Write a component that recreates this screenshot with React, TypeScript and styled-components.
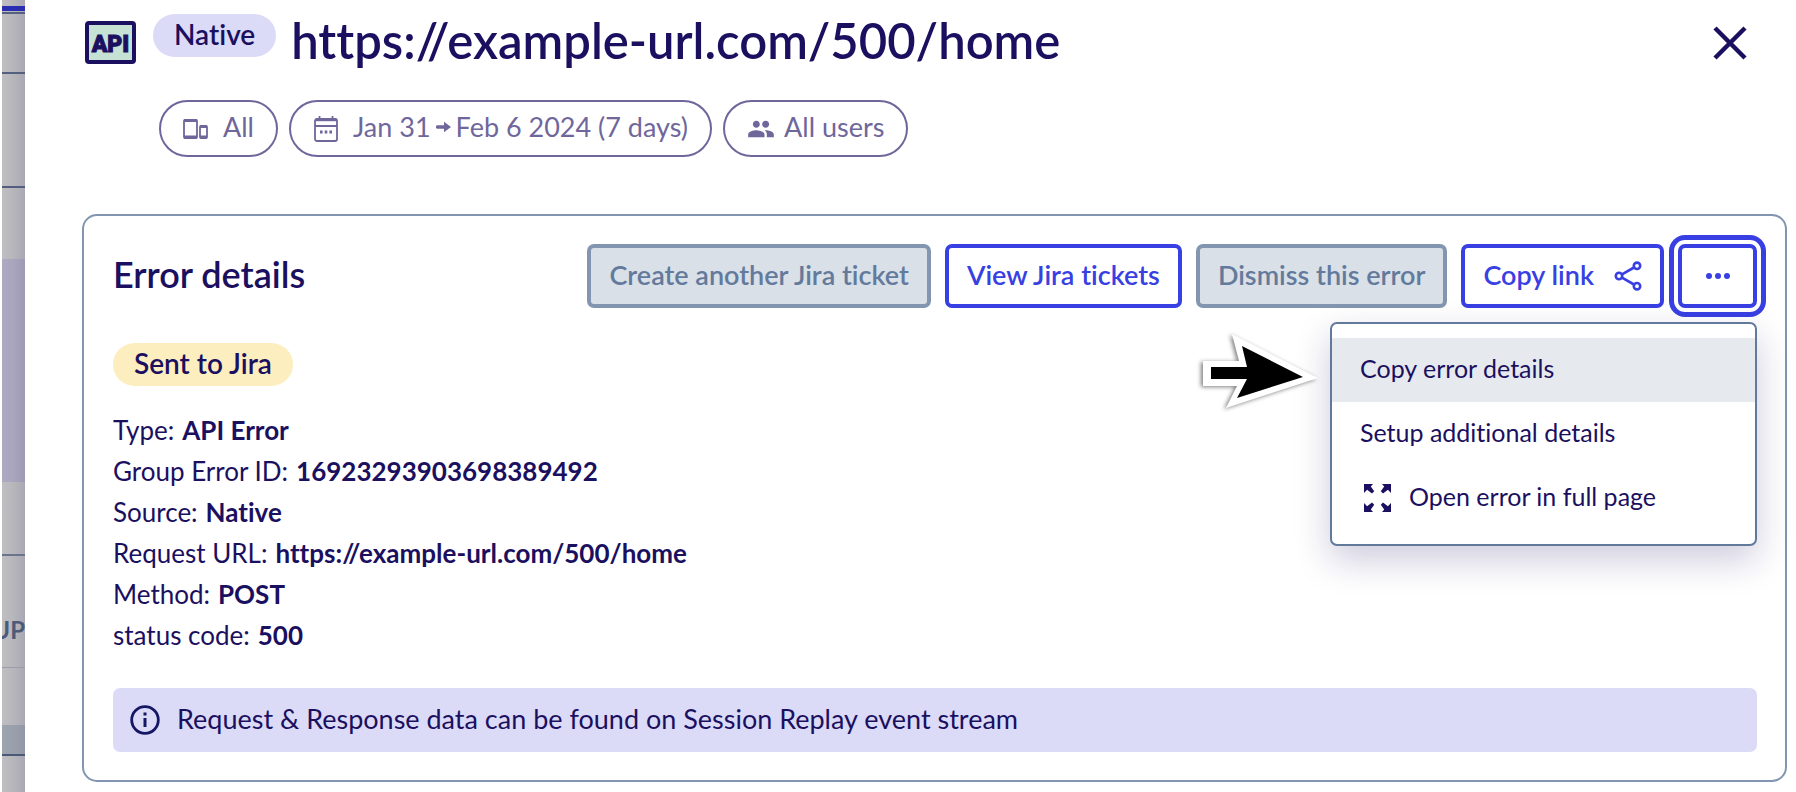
import React from 'react';
import styled, { createGlobalStyle, css } from 'styled-components';
import { MdPeople } from 'react-icons/md';

const navy = '#1b1060';
const blue = '#3840e3';
const muted = '#6f679b';
const slate = '#8296b1';
const lavender = '#dbdbf8';

const GlobalStyle = createGlobalStyle`
  * { box-sizing: border-box; }
  body {
    margin: 0;
    background: #fff;
    color: ${navy};
    font-family: Lato, "Open Sans", sans-serif;
    font-size: 27px;
    line-height: 41px;
    font-variant-ligatures: none;
  }
  button { font: inherit; color: inherit; cursor: pointer; }
  svg { display: block; flex: none; }
`;

const Page = styled.div`
  display: grid;
  grid-template-columns: 25px minmax(0, 1fr);
  min-height: 100vh;
`;

const Backdrop = styled.aside`
  display: flex;
  flex-direction: column;
  margin-left: 2px;
  overflow: hidden;
  background: linear-gradient(to right, #bfbec2, #b7b6bb 50%, #a9a7b4);
`;

const Band = styled.div<{ $height: number; $color?: string }>`
  flex: none;
  height: ${(p) => p.$height}px;
  background: ${(p) => p.$color ?? 'transparent'};
`;

const ColumnHead = styled.div`
  display: flex;
  flex: none;
  align-items: center;
  justify-content: flex-end;
  height: 111px;
  padding-top: 36px;
  color: #4d5a78;
  font-size: 24px;
  font-weight: 700;
`;

const Panel = styled.main`
  padding: 14px 9px 9px 57px;
`;

const Header = styled.header`
  display: flex;
  align-items: flex-start;
  padding: 0 37px 0 3px;
`;

const ApiIcon = styled.svg`
  margin: 7px 17px 0 0;
`;

const Tag = styled.span<{ $tone: 'lavender' | 'yellow' }>`
  display: inline-block;
  height: 43px;
  padding: 0 21px;
  border-radius: 22px;
  font-size: 28px;
  font-weight: 600;
  line-height: 40px;
  background: ${(p) => (p.$tone === 'yellow' ? '#fdeec0' : lavender)};
`;

const Title = styled.h1`
  flex: 1;
  margin: 0 0 0 15px;
  font-size: 49px;
  font-weight: 600;
  line-height: 52px;
`;

const CloseButton = styled.button`
  display: flex;
  margin-top: 9px;
  padding: 0;
  border: 0;
  background: none;
`;

const Chips = styled.div`
  display: flex;
  gap: 11px;
  margin: 34px 0 57px 77px;
`;

/* Lifts the text slightly so that it looks centred next to an icon. */
const Label = styled.span`
  padding-bottom: 4px;
`;

const Chip = styled.button<{ $tight?: boolean }>`
  display: flex;
  align-items: center;
  gap: ${(p) => (p.$tight ? 9 : 14)}px;
  height: 57px;
  padding: 0 22px;
  border: 2px solid ${muted};
  border-radius: 29px;
  background: #fff;
  color: ${muted};
`;

const Range = styled(Label)`
  display: flex;
  align-items: center;
  gap: 5px;
`;

const Card = styled.section`
  padding: 28px 28px 28px 29px;
  border: 2px solid ${slate};
  border-radius: 15px;
`;

const CardHead = styled.div`
  display: flex;
  align-items: center;
  justify-content: space-between;
  margin-bottom: 35px;
`;

const CardTitle = styled.h2`
  margin: 0;
  padding-bottom: 4px;
  font-size: 36px;
  font-weight: 600;
`;

const Actions = styled.div`
  display: flex;
  gap: 14px;
`;

const Button = styled.button<{ $focused?: boolean }>`
  display: flex;
  align-items: center;
  justify-content: center;
  gap: 20px;
  height: 64px;
  min-width: 79px;
  padding: 0 18px;
  border: 4px solid ${blue};
  border-radius: 7px;
  background: #fff;
  color: ${blue};
  font-weight: 600;
  white-space: nowrap;
  &:disabled {
    border-color: ${slate};
    background: #d9e0e7;
    color: #637a9c;
    cursor: default;
  }
  ${(p) =>
    p.$focused &&
    css`
      outline: 5px solid ${blue};
      outline-offset: 4px;
    `}
`;

const MenuAnchor = styled.div`
  position: relative;
`;

const Menu = styled.div`
  position: absolute;
  top: 78px;
  right: 0;
  width: 427px;
  padding: 14px 0;
  border: 2px solid #63799c;
  border-radius: 7px;
  background: #fff;
  box-shadow: 0 14px 36px rgba(27, 16, 96, 0.22);
`;

const MenuItem = styled.button<{ $active?: boolean }>`
  display: flex;
  align-items: center;
  gap: 16px;
  width: 100%;
  height: 64px;
  padding: 0 28px;
  border: 0;
  background: ${(p) => (p.$active ? '#e6eaee' : 'none')};
  font-size: 25px;
  text-align: left;
`;

const Pointer = styled.svg`
  position: absolute;
  top: 86px;
  right: 437px;
  filter: drop-shadow(-2px 1px 2px rgba(0, 0, 0, 0.5));
`;

const Details = styled.dl`
  margin: 24px 0 32px;
  font-size: 26px;
`;

const Detail = styled.div`
  display: flex;
  gap: 8px;
`;

const Term = styled.dt``;

const Value = styled.dd`
  margin: 0;
  font-weight: 700;
`;

const Notice = styled.div`
  display: flex;
  align-items: center;
  gap: 17px;
  height: 64px;
  padding: 0 17px;
  border-radius: 7px;
  background: ${lavender};
`;

const details: [string, string][] = [
  ['Type:', 'API Error'],
  ['Group Error ID:', '16923293903698389492'],
  ['Source:', 'Native'],
  ['Request URL:', 'https://example-url.com/500/home'],
  ['Method:', 'POST'],
  ['status code:', '500'],
];

const DevicesIcon = () => (
  <svg width="26" height="26" viewBox="0 0 26 26" fill="none" stroke="currentColor">
    <rect x="1" y="4" width="13" height="18" rx="1" strokeWidth="1.800" />
    <path d="M1 4.500h13M1 21h13" strokeWidth="2.800" />
    <rect x="17" y="10" width="7" height="12" rx="1" strokeWidth="1.800" />
    <path d="M17 10.500h7M17 21h7" strokeWidth="2.800" />
  </svg>
);

const CalendarIcon = () => (
  <svg width="26" height="28" viewBox="0 0 26 28" fill="none" stroke="currentColor" strokeWidth="1.800">
    <rect x="2" y="4" width="22" height="22" rx="2" />
    <path d="M2 5h22" strokeWidth="2.400" />
    <path d="M2 11h22M6.500 1v4M19.500 1v4" />
    <path d="M7 17h2.600M11.700 17h2.600M16.400 17h2.600" strokeWidth="2.800" />
  </svg>
);

const RangeArrow = () => (
  <svg width="15" height="12" viewBox="0 0 15 12" fill="currentColor">
    <path d="M1.500 4.300h6.500V.800L15 6l-7 5.200V7.700H1.500a1.700 1.700 0 0 1 0-3.400z" />
  </svg>
);

const ShareIcon = () => (
  <svg width="28" height="30" viewBox="0 0 28 30" fill="none" stroke="currentColor" strokeWidth="2.600">
    <circle cx="5" cy="15" r="3.200" />
    <circle cx="23" cy="4.800" r="3.200" />
    <circle cx="23" cy="25.200" r="3.200" />
    <path d="M8 13.300l12-6.800M8 16.700l12 6.800" />
  </svg>
);

const ExpandIcon = () => (
  <svg width="33" height="28" viewBox="-4 0 33 28" fill="currentColor">
    <path d="M0 0h9L6.800 2.400l3.400 4.800-2.200 2.200-4.900-3.700L0 9z" />
    <path d="M27 0h-9l2.200 2.400-3.400 4.800 2.200 2.200 4.900-3.700L27 9z" />
    <path d="M0 28h9l-2.200-2.400 3.400-4.800-2.200-2.200-4.900 3.700L0 19z" />
    <path d="M27 28h-9l2.200-2.400-3.400-4.800 2.200-2.200 4.900 3.700L27 19z" />
  </svg>
);

const InfoIcon = () => (
  <svg width="30" height="30" viewBox="0 0 30 30" fill="none" stroke="#151765" strokeWidth="3">
    <circle cx="15" cy="15" r="13.300" strokeWidth="2.800" />
    <path d="M15 13v9M15 7.500v3" />
  </svg>
);

export default function App() {
  return (
    <>
      <GlobalStyle />
      <Page>
        <Backdrop>
          <Band $height={6} />
          <Band $height={5} $color="#2b2db3" />
          <Band $height={1} />
          <Band $height={2} $color="#56617f" />
          <Band $height={58} />
          <Band $height={2} $color="#53617f" />
          <Band $height={112} />
          <Band $height={2} $color="#535d80" />
          <Band $height={71} />
          <Band $height={223} $color="rgba(123, 114, 190, 0.25)" />
          <Band $height={72} />
          <Band $height={2} $color="#6a748f" />
          <ColumnHead>UP</ColumnHead>
          <Band $height={1} $color="#9b9ba9" />
          <Band $height={57} />
          <Band $height={29} $color="rgba(110, 128, 148, 0.4)" />
          <Band $height={2} $color="#4b5878" />
        </Backdrop>
        <Panel>
          <Header>
            <ApiIcon width="51" height="43" viewBox="0 0 51 43">
              <rect x="2" y="2" width="47" height="39" rx="2" fill="#c5e2d5" stroke={navy} strokeWidth="4" />
              <text
                x="25.500"
                y="30.500"
                fill={navy}
                stroke={navy}
                strokeWidth="1"
                textAnchor="middle"
                fontFamily="Roboto, sans-serif"
                fontSize="23"
                fontWeight="900"
              >
                API
              </text>
            </ApiIcon>
            <Tag $tone="lavender">Native</Tag>
            <Title>https://example-url.com/500/home</Title>
            <CloseButton aria-label="Close">
              <svg width="40" height="40" viewBox="0 0 40 40" stroke={navy} strokeWidth="4.500">
                <path d="M5 5l30 30M35 5L5 35" />
              </svg>
            </CloseButton>
          </Header>
          <Chips>
            <Chip>
              <DevicesIcon />
              <Label>All</Label>
            </Chip>
            <Chip>
              <CalendarIcon />
              <Range>
                Jan 31 <RangeArrow /> Feb 6 2024 (7 days)
              </Range>
            </Chip>
            <Chip $tight>
              <MdPeople size={28} />
              <Label>All users</Label>
            </Chip>
          </Chips>
          <Card>
            <CardHead>
              <CardTitle>Error details</CardTitle>
              <Actions>
                <Button disabled>
                  <Label>Create another Jira ticket</Label>
                </Button>
                <Button>
                  <Label>View Jira tickets</Label>
                </Button>
                <Button disabled>
                  <Label>Dismiss this error</Label>
                </Button>
                <Button>
                  <Label>Copy link</Label>
                  <ShareIcon />
                </Button>
                <MenuAnchor>
                  <Button $focused aria-label="More actions" aria-expanded="true">
                    <svg width="24" height="8" viewBox="0 0 24 8" fill="currentColor">
                      <circle cx="3" cy="4" r="3" />
                      <circle cx="12" cy="4" r="3" />
                      <circle cx="21" cy="4" r="3" />
                    </svg>
                  </Button>
                  <Menu role="menu">
                    <MenuItem role="menuitem" $active>
                      <Label>Copy error details</Label>
                    </MenuItem>
                    <MenuItem role="menuitem">
                      <Label>Setup additional details</Label>
                    </MenuItem>
                    <MenuItem role="menuitem">
                      <ExpandIcon />
                      <Label>Open error in full page</Label>
                    </MenuItem>
                  </Menu>
                  <Pointer width="120" height="80" viewBox="10 5 120 80">
                    <path d="M13 36h36L42 9l86 44-92 30 11-22H13z" fill="#fff" />
                    <path d="M21 42h36l-5-21 61 31-66 21 10-19H21z" fill="#000" />
                  </Pointer>
                </MenuAnchor>
              </Actions>
            </CardHead>
            <Tag $tone="yellow">Sent to Jira</Tag>
            <Details>
              {details.map(([term, value]) => (
                <Detail key={term}>
                  <Term>{term}</Term>
                  <Value>{value}</Value>
                </Detail>
              ))}
            </Details>
            <Notice>
              <InfoIcon />
              <Label>
                Request &amp; Response data can be found on Session Replay event stream
              </Label>
            </Notice>
          </Card>
        </Panel>
      </Page>
    </>
  );
}
